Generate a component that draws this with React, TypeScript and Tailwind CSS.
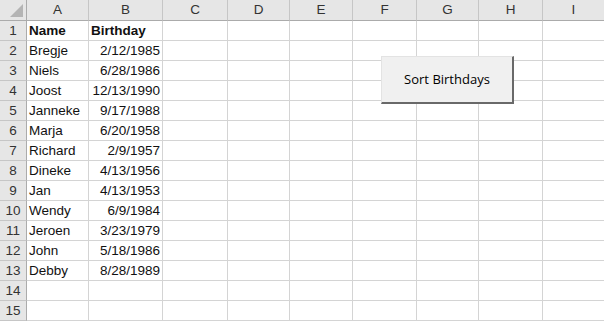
import React from "react";

const COLS: { label: string; w: number }[] = [
  { label: "A", w: 62 },
  { label: "B", w: 74 },
  { label: "C", w: 65 },
  { label: "D", w: 62 },
  { label: "E", w: 63 },
  { label: "F", w: 64 },
  { label: "G", w: 62 },
  { label: "H", w: 64 },
  { label: "I", w: 62 },
];

const DATA: [string, string][] = [
  ["Bregje", "2/12/1985"],
  ["Niels", "6/28/1986"],
  ["Joost", "12/13/1990"],
  ["Janneke", "9/17/1988"],
  ["Marja", "6/20/1958"],
  ["Richard", "2/9/1957"],
  ["Dineke", "4/13/1956"],
  ["Jan", "4/13/1953"],
  ["Wendy", "6/9/1984"],
  ["Jeroen", "3/23/1979"],
  ["John", "5/18/1986"],
  ["Debby", "8/28/1989"],
];

const template = `27px ${COLS.map(c => `${c.w}px`).join(" ")}`;

export default function App() {
  const rows = Array.from({ length: 15 }, (_, i) => i + 1);
  return (
    <div className="relative w-[604px] h-[321px] overflow-hidden bg-white text-[#111]" style={{ fontFamily: '"Liberation Sans", Arial, sans-serif' }}>
      <div className="grid" style={{ gridTemplateColumns: template }}>
        {/* header row */}
        <div className="h-[21px] bg-[#e6e6e6] border-r border-b border-[#ababab] relative">
          <div className="absolute right-[3px] bottom-[3px] w-0 h-0 border-l-[13px] border-l-transparent border-b-[13px] border-b-[#b4b4b4]" />
        </div>
        {COLS.map(c => (
          <div key={c.label} className="h-[21px] bg-[#e6e6e6] border-r border-b border-r-[#c6c6c6] border-b-[#ababab] flex items-center justify-center pt-[1px] text-[13.5px] text-[#333]">
            {c.label}
          </div>
        ))}
        {rows.map(r => {
          const d = r === 1 ? ["Name", "Birthday"] : DATA[r - 2];
          return (
            <React.Fragment key={r}>
              <div className="h-[20px] bg-[#e6e6e6] border-r border-b border-r-[#ababab] border-b-[#c6c6c6] flex items-center justify-center pt-[2px] text-[13.5px] text-[#333]">
                {r}
              </div>
              {COLS.map((c, ci) => {
                let content: React.ReactNode = null;
                let cls = "";
                if (d && ci === 0) { content = d[0]; cls = "justify-start pl-[2px]"; }
                if (d && ci === 1) { content = d[1]; cls = r === 1 ? "justify-start pl-[2px]" : "justify-end pr-[2px]"; }
                return (
                  <div key={c.label} className={`h-[20px] border-r border-b border-[#d4d4d4] flex items-center pt-[2px] text-[13.5px] whitespace-nowrap ${cls} ${r === 1 ? "font-bold" : ""}`}>
                    {content}
                  </div>
                );
              })}
            </React.Fragment>
          );
        })}
      </div>

      <button className="absolute left-[381px] top-[56px] w-[133px] h-[48px] bg-[#f0f0f0] border-t border-l border-t-[#e3e3e3] border-l-[#e3e3e3] border-r-2 border-b-2 border-r-[#696969] border-b-[#696969] text-[13px] text-black flex items-center justify-center" style={{ fontFamily: '"Open Sans", "Noto Sans", sans-serif' }}>
        Sort Birthdays
      </button>
    </div>
  );
}
